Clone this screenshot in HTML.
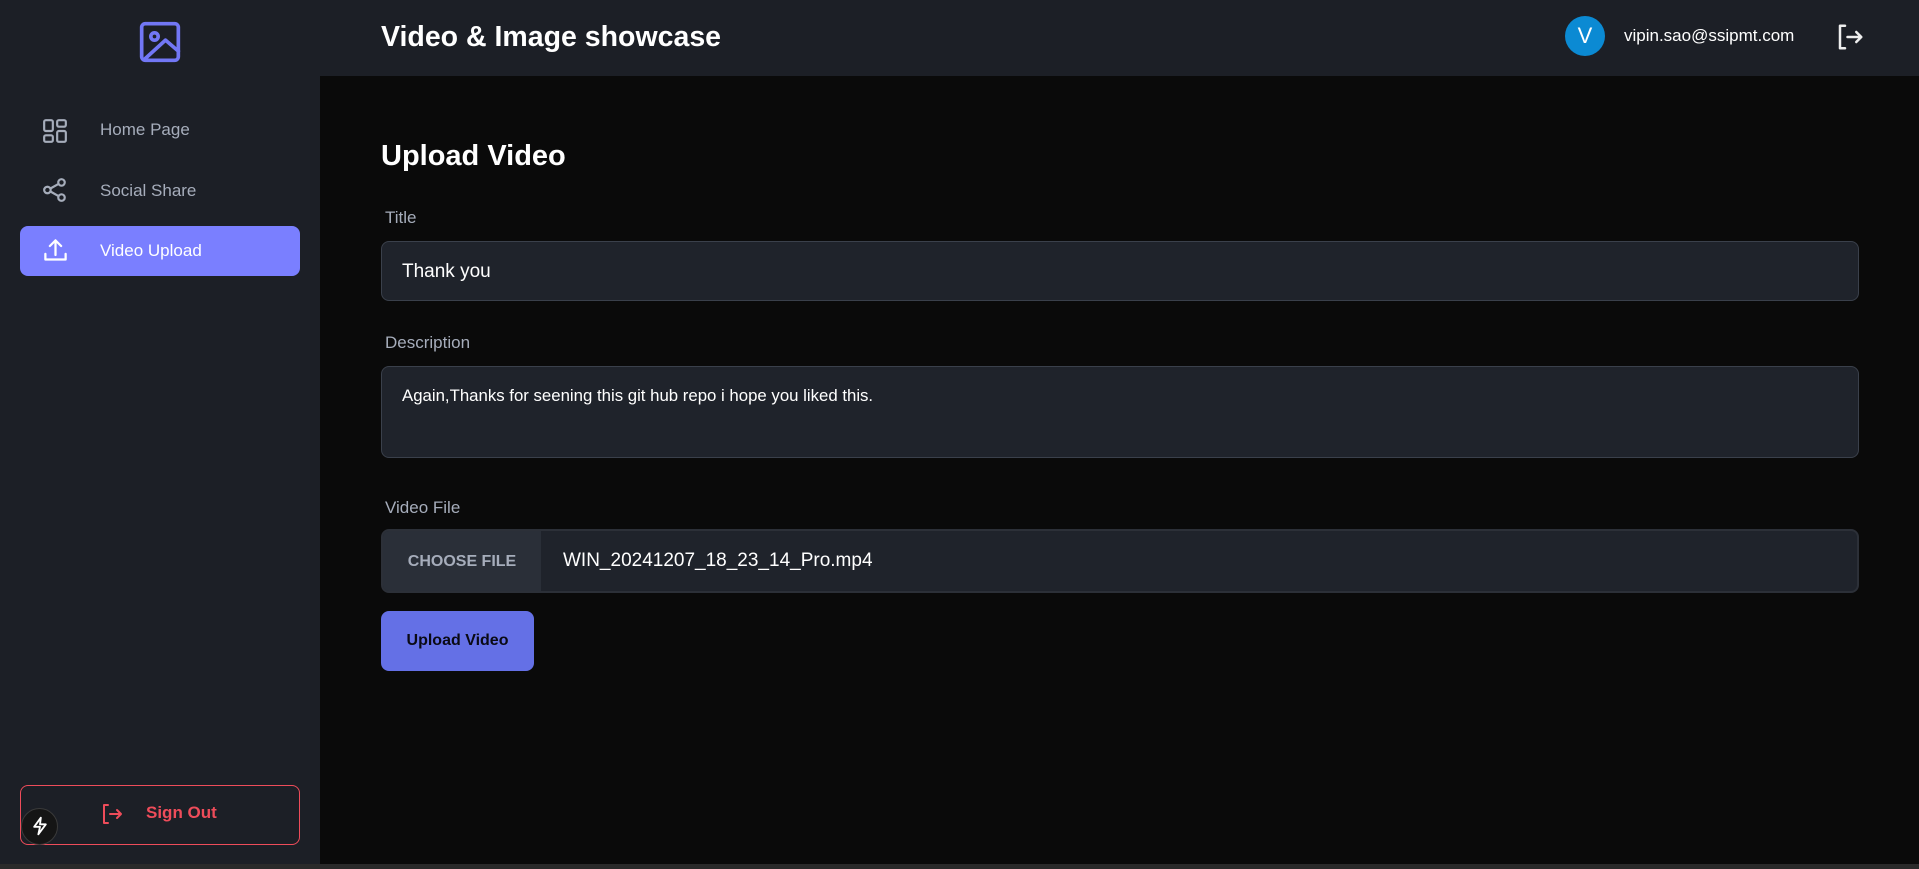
<!DOCTYPE html>
<html><head><meta charset="utf-8"><style>
*{box-sizing:border-box;margin:0;padding:0}
body{width:1919px;height:869px;background:#0a0a0a;font-family:"Liberation Sans",sans-serif;position:relative;overflow:hidden}
.a{position:absolute}
.side{left:0;top:0;width:320px;height:864px;background:#1c1f26}
.head{left:320px;top:0;width:1599px;height:76px;background:#1c1f26}
.nav{color:#a6adbb;font-size:17px}
.lbl{color:#a6adbb;font-size:17px;left:385px}
.box{left:381px;width:1478px;background:#1f232b;border:1px solid #3a404b;border-radius:8px;color:#fff}
</style></head><body>
<div class="a side"></div>
<div class="a head"></div>
<svg class="a" style="left:138px;top:20px" width="44" height="44" viewBox="0 0 24 24" fill="none" stroke="#7277f5" stroke-width="2" stroke-linecap="round" stroke-linejoin="round"><rect x="2" y="2" width="20" height="20" rx="2"/><circle cx="9" cy="9" r="2"/><path d="M4 21 L15 11 L22 17"/></svg>

<svg class="a" style="left:42px;top:118px" width="26" height="26" viewBox="0 0 24 24" fill="none" stroke="#a6adbb" stroke-width="2" stroke-linejoin="round"><rect x="2" y="2" width="8" height="10" rx="1.5"/><rect x="14" y="2" width="8" height="6" rx="1.5"/><rect x="2" y="16" width="8" height="6" rx="1.5"/><rect x="14" y="12" width="8" height="10" rx="1.5"/></svg>
<div class="a nav" style="left:100px;top:120px">Home Page</div>
<svg class="a" style="left:42px;top:177px" width="26" height="26" viewBox="0 0 24 24" fill="none" stroke="#a6adbb" stroke-width="2"><circle cx="18" cy="5" r="3"/><circle cx="5" cy="12" r="3"/><circle cx="18" cy="19" r="3"/><path d="M8 10.5 L15 6.5 M8 13.5 L15 17.5"/></svg>
<div class="a nav" style="left:100px;top:181px">Social Share</div>
<div class="a" style="left:20px;top:226px;width:280px;height:50px;background:#7a7fff;border-radius:8px"></div>
<svg class="a" style="left:42px;top:237px" width="27" height="27" viewBox="0 0 24 24" fill="none" stroke="#fff" stroke-width="2" stroke-linecap="round" stroke-linejoin="round"><path d="M3 15v5h18v-5M12 16V3M7 8l5-5 5 5"/></svg>
<div class="a" style="left:100px;top:241px;color:#fff;font-size:17px">Video Upload</div>

<div class="a" style="left:20px;top:785px;width:280px;height:60px;border:1px solid #ee4c5a;border-radius:8px"></div>
<svg class="a" style="left:100px;top:802px" width="24" height="24" viewBox="0 0 24 24" fill="none" stroke="#ee4c5a" stroke-width="2" stroke-linecap="round" stroke-linejoin="round"><path d="M8 3H4v18h4M10 12h11M17 8l4 4-4 4"/></svg>
<div class="a" style="left:146px;top:803px;color:#ee4c5a;font-size:17px;font-weight:bold">Sign Out</div>
<div class="a" style="left:21px;top:808px;width:37px;height:37px;border-radius:50%;background:#151515;border:1px solid #3a3a3a"></div>
<svg class="a" style="left:30px;top:816px" width="20" height="20" viewBox="0 0 24 24" fill="none" stroke="#fff" stroke-width="2.2" stroke-linejoin="round"><path d="M13 2 L5 13 H12 L10 22 L19 10 H12 Z"/></svg>

<div class="a" style="left:381px;top:21px;color:#fff;font-size:28.5px;font-weight:bold">Video &amp; Image showcase</div>
<div class="a" style="left:1565px;top:16px;width:40px;height:40px;border-radius:50%;background:#0b8ad3;color:#fff;font-size:22px;text-align:center;line-height:40px">V</div>
<div class="a" style="left:1624px;top:26px;color:#fff;font-size:17px">vipin.sao@ssipmt.com</div>
<svg class="a" style="left:1835px;top:22px" width="30" height="30" viewBox="0 0 24 24" fill="none" stroke="#eee" stroke-width="2" stroke-linecap="round" stroke-linejoin="round"><path d="M8 3H4v18h4M10 12h11M17 8l4 4-4 4"/></svg>

<div class="a" style="left:381px;top:140px;color:#fff;font-size:29px;font-weight:bold">Upload Video</div>
<div class="a lbl" style="top:208px">Title</div>
<div class="a box" style="top:241px;height:60px;font-size:19px;padding:19px 0 0 20px">Thank you</div>
<div class="a lbl" style="top:333px">Description</div>
<div class="a box" style="top:366px;height:92px;font-size:16.8px;padding:19px 0 0 20px">Again,Thanks for seening this git hub repo i hope you liked this.</div>
<div class="a lbl" style="top:498px">Video File</div>
<div class="a box" style="top:529px;height:64px;border:2px solid #2c3038;overflow:hidden">
 <div class="a" style="left:0;top:0;width:158px;height:60px;background:#2a2f38;color:#a6adbb;font-weight:bold;font-size:16px;line-height:62px;text-align:center">CHOOSE FILE</div>
 <div class="a" style="left:180px;top:19px;font-size:19px;color:#fff">WIN_20241207_18_23_14_Pro.mp4</div>
</div>
<div class="a" style="left:381px;top:611px;width:153px;height:60px;background:#6470e6;border-radius:8px;color:#0a0a14;font-weight:bold;font-size:16px;line-height:60px;text-align:center">Upload Video</div>
<div class="a" style="left:0;top:864px;width:1919px;height:5px;background:#2a2a2a"></div>
</body></html>
